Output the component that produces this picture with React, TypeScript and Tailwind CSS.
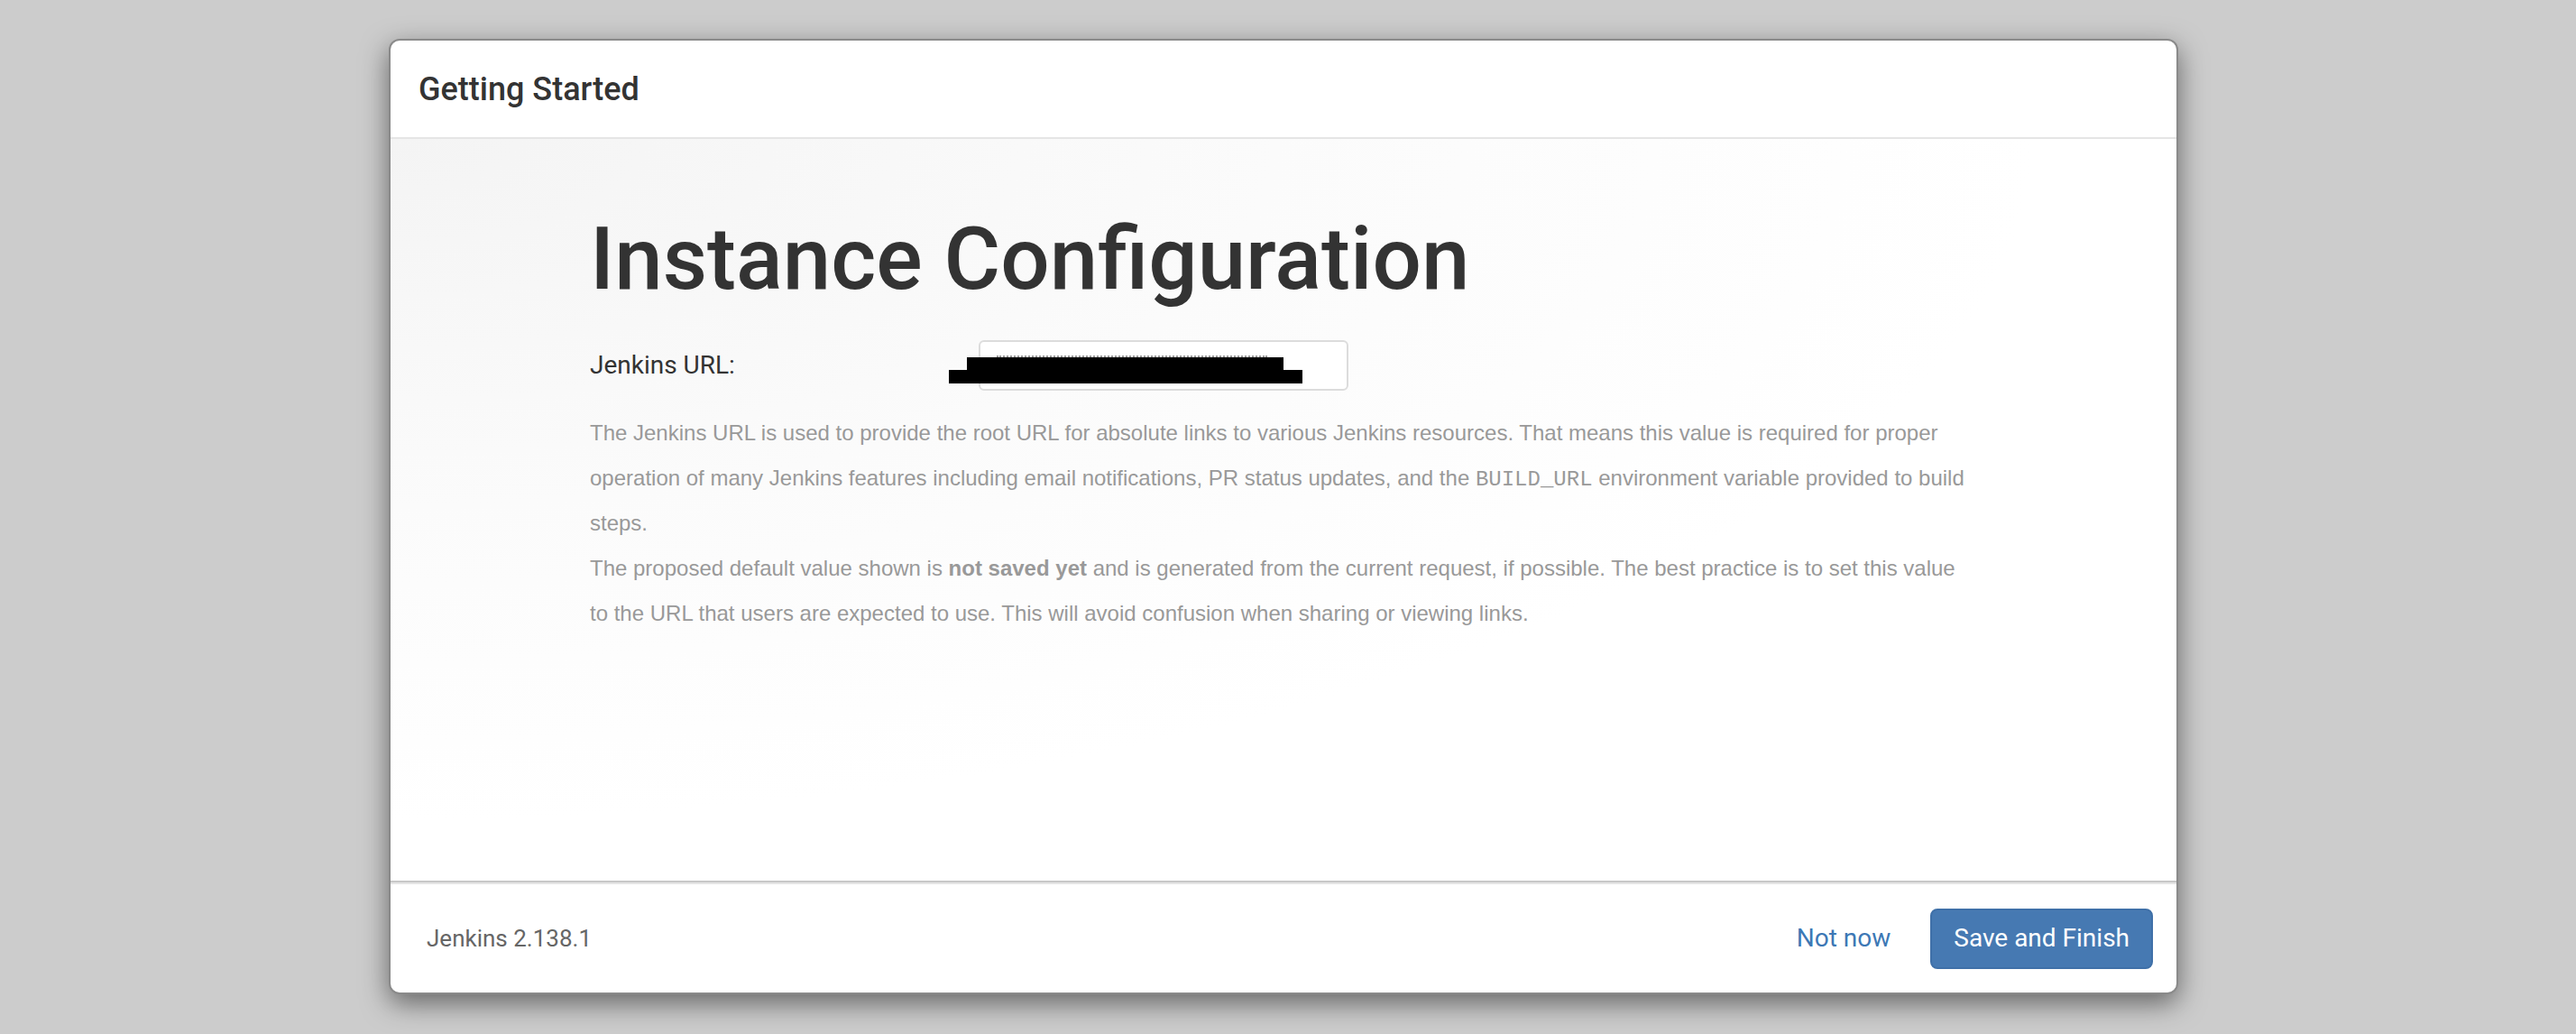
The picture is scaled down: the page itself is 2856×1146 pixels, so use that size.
import React from "react";

const mono = { fontFamily: "'Liberation Mono', 'Courier New', monospace" };
const helv = { fontFamily: "'Liberation Sans', Helvetica, Arial, sans-serif" };

export default function App() {
  return (
    <div
      className="min-h-screen w-full bg-[#cccccc] pt-[43px] pl-[431px]"
      style={{ fontFamily: "Roboto, 'Helvetica Neue', Arial, sans-serif" }}
    >
      <div className="w-[1984px] h-[1059px] flex flex-col bg-white rounded-[12px] border-2 border-[#8a8a8a] shadow-[0_10px_30px_rgba(0,0,0,0.5)] overflow-hidden">
        {/* Header */}
        <div className="h-[109px] shrink-0 flex items-center pl-[31px] border-b-2 border-[#e5e5e5]">
          <h4 className="text-[36px] leading-none font-medium text-[#333333]">Getting Started</h4>
        </div>

        {/* Body */}
        <div className="flex-1 px-[221px] pt-[85px] bg-[radial-gradient(ellipse_at_top_left,#f4f4f4_0%,#fbfbfb_35%,#ffffff_65%)]">
          <h1 className="text-[96px] leading-none font-medium text-[#333333]">Instance Configuration</h1>

          <div className="mt-[42px] flex items-center h-[56px]">
            <label className="w-[431px] shrink-0 text-[28px] text-[#333333]">Jenkins URL:</label>
            <div className="relative w-[410px] h-[56px] rounded-[6px] border-2 border-[#dcdcdc] bg-white">
              <div className="absolute left-[18px] top-[15px] w-[300px] border-t-2 border-dotted border-[#9a9a9a]" />
              <div className="absolute left-[-15px] top-[17px] w-[351px] h-[15px] bg-black" />
              <div className="absolute left-[-35px] top-[31px] w-[392px] h-[15px] bg-black" />
            </div>
          </div>

          <div className="mt-[22px] text-[24px] leading-[50px] text-[#999999] whitespace-nowrap" style={helv}>
            <p>
              The Jenkins URL is used to provide the root URL for absolute links to various Jenkins resources. That
              means this value is required for proper
              <br />
              operation of many Jenkins features including email notifications, PR status updates, and the{" "}
              <code style={mono} className="text-[24px] leading-none">
                BUILD_URL
              </code>{" "}
              environment variable provided to build
              <br />
              steps.
            </p>
            <p>
              The proposed default value shown is <strong className="font-bold">not saved yet</strong> and is
              generated from the current request, if possible. The best practice is to set this value
              <br />
              to the URL that users are expected to use. This will avoid confusion when sharing or viewing links.
            </p>
          </div>
        </div>

        {/* Footer */}
        <div className="shrink-0 border-t-2 border-[#c8c8c8]">
          <div className="h-[122px] border-t-2 border-[#e5e5e5] flex items-center justify-between pl-[40px] pr-[26px]">
            <span className="text-[26px] text-[#666666]">Jenkins 2.138.1</span>
            <div className="flex items-center gap-[44px]">
              <a className="text-[28px] text-[#3d78b5] cursor-pointer">Not now</a>
              <button className="h-[67px] px-[24px] rounded-[8px] bg-[#4679b2] border-2 border-[#3f70a8] text-white text-[28px]">
                Save and Finish
              </button>
            </div>
          </div>
        </div>
      </div>
    </div>
  );
}
